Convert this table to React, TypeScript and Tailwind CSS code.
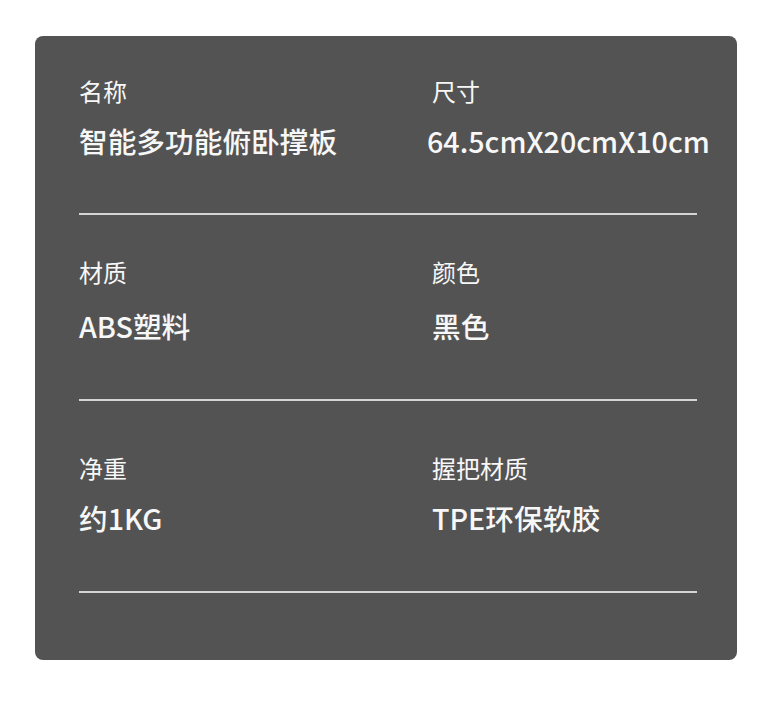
import React from 'react';

type Spec = { label: string; value: string; nudge?: string };

const rows: { items: [Spec, Spec]; pad: string; gap: string }[] = [
  {
    items: [
      { label: '名称', value: '智能多功能俯卧撑板' },
      { label: '尺寸', value: '64.5cmX20cmX10cm', nudge: '-ml-[5px]' },
    ],
    pad: 'pt-[43px] pb-[58px]',
    gap: 'gap-[24px]',
  },
  {
    items: [
      { label: '材质', value: 'ABS塑料' },
      { label: '颜色', value: '黑色' },
    ],
    pad: 'pt-[45px] pb-[59px]',
    gap: 'gap-[28px]',
  },
  {
    items: [
      { label: '净重', value: '约1KG' },
      { label: '握把材质', value: 'TPE环保软胶' },
    ],
    pad: 'pt-[55px] pb-[59px]',
    gap: 'gap-[24px]',
  },
];

export default function App() {
  return (
    <div
      className="w-[780px] h-[712px] bg-white pt-[36px] pl-[35px]"
      style={{ fontFamily: '"Noto Sans CJK SC", "Noto Sans", sans-serif' }}
    >
      <div className="w-[702px] h-[624px] bg-[#535353] rounded-[8px] pl-[44px] pr-[40px] text-[#f7f7f7]">
        {rows.map((row, i) => (
          <div key={i} className="border-b-2 border-[#d4d4d4]">
            <div className={`grid grid-cols-[353px_1fr] ${row.pad}`}>
              {row.items.map(item => (
                <div key={item.label} className={`flex flex-col ${row.gap}`}>
                  <div className="text-[24px] leading-[24px]">{item.label}</div>
                  <div className={`text-[28.7px] leading-[28px] font-medium whitespace-nowrap ${item.nudge ?? ''}`}>
                    {item.value}
                  </div>
                </div>
              ))}
            </div>
          </div>
        ))}
      </div>
    </div>
  );
}
